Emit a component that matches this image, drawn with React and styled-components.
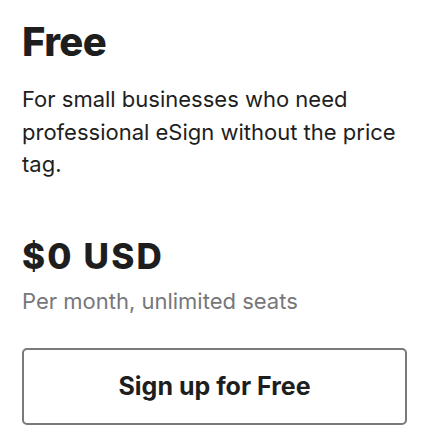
import React from "react";
import styled, { createGlobalStyle } from "styled-components";

const GlobalStyle = createGlobalStyle`
  body {
    margin: 0;
    background: #ffffff;
    font-family: Inter, "Liberation Sans", sans-serif;
    color: #1e1e1e;
  }
`;

const Card = styled.section`
  padding: 18px 23px 0 22px;
  display: flex;
  flex-direction: column;
  align-items: flex-start;
`;

const Title = styled.h2`
  margin: 0;
  font-size: 40px;
  line-height: 48px;
  font-weight: 800;
  letter-spacing: -0.6px;
`;

const Description = styled.p`
  margin: 17px 0 0;
  font-size: 22px;
  line-height: 32.5px;
  font-weight: 400;
`;

const Price = styled.div`
  margin-top: 55px;
  font-size: 35px;
  line-height: 40px;
  font-weight: 800;
  letter-spacing: 2.2px;
`;

const Note = styled.div`
  margin-top: 11px;
  font-size: 22px;
  line-height: 28px;
  color: #77777b;
`;

const SignUpButton = styled.button`
  margin-top: 33px;
  height: 77px;
  width: 385px;
  background: #fff;
  border: 2px solid #7a7a7a;
  border-radius: 5px;
  font-family: inherit;
  font-size: 25px;
  font-weight: 700;
  color: #1e1e1e;
  cursor: pointer;
`;

export default function App() {
  return (
    <>
      <GlobalStyle />
      <Card>
        <Title>Free</Title>
        <Description>
          For small businesses who need professional eSign without the price tag.
        </Description>
        <Price>$0 USD</Price>
        <Note>Per month, unlimited seats</Note>
        <SignUpButton>Sign up for Free</SignUpButton>
      </Card>
    </>
  );
}
